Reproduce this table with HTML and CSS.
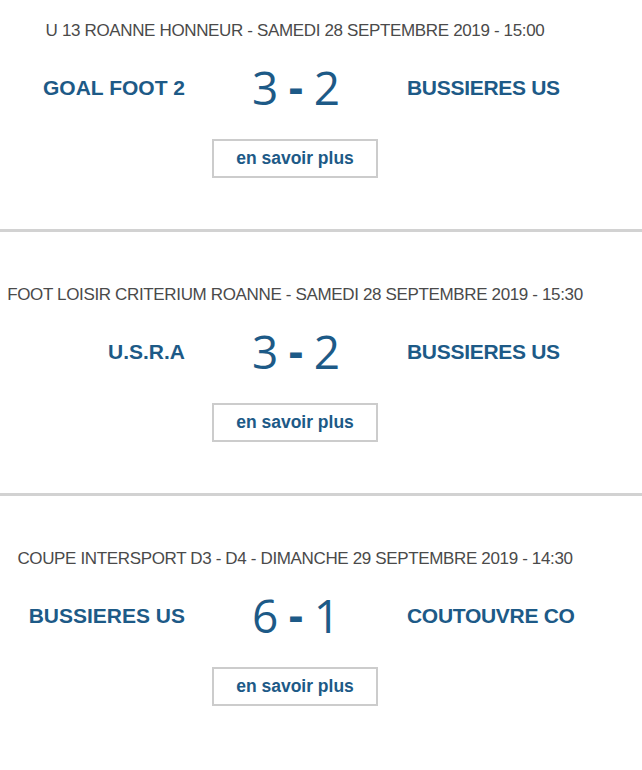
FILE: index.html
```html
<!DOCTYPE html>
<html lang="fr">
<head>
<meta charset="utf-8">
<title>Résultats</title>
<link rel="stylesheet" href="styles.css">
</head>
<body>
<div class="matches">
  <section class="match match--first">
    <div class="match__title">U 13 ROANNE HONNEUR - SAMEDI 28 SEPTEMBRE 2019 - 15:00</div>
    <div class="match__row">
      <div class="team team--home">GOAL FOOT 2</div>
      <div class="score"><span class="score__n">3</span><span class="score__sep">-</span><span class="score__n">2</span></div>
      <div class="team team--away">BUSSIERES US</div>
    </div>
    <div class="match__more"><a class="btn" href="#">en savoir plus</a></div>
  </section>
  <section class="match">
    <div class="match__title">FOOT LOISIR CRITERIUM ROANNE - SAMEDI 28 SEPTEMBRE 2019 - 15:30</div>
    <div class="match__row">
      <div class="team team--home">U.S.R.A</div>
      <div class="score"><span class="score__n">3</span><span class="score__sep">-</span><span class="score__n">2</span></div>
      <div class="team team--away">BUSSIERES US</div>
    </div>
    <div class="match__more"><a class="btn" href="#">en savoir plus</a></div>
  </section>
  <section class="match match--last">
    <div class="match__title">COUPE INTERSPORT D3 - D4 - DIMANCHE 29 SEPTEMBRE 2019 - 14:30</div>
    <div class="match__row">
      <div class="team team--home">BUSSIERES US</div>
      <div class="score"><span class="score__n">6</span><span class="score__sep">-</span><span class="score__n">1</span></div>
      <div class="team team--away">COUTOUVRE CO</div>
    </div>
    <div class="match__more"><a class="btn" href="#">en savoir plus</a></div>
  </section>
</div>
</body>
</html>
```
FILE: styles.css
```css
html, body {
  margin: 0;
  padding: 0;
  background: #ffffff;
}
body {
  font-family: "Liberation Sans Narrow", "Liberation Sans", Arial, sans-serif;
  color: #4a4a4a;
}
.matches {
  width: 642px;
}
.match {
  padding: 49px 0 51px;
  border-bottom: 3px solid #d2d2d2;
}
.match--first {
  padding-top: 17px;
}
.match--last {
  border-bottom: none;
}
.match__title {
  width: 590px;
  text-align: center;
  font-size: 17px;
  letter-spacing: -0.35px;
  line-height: 24px;
  padding-top: 2px;
  color: #4a4a4a;
  white-space: nowrap;
}
.match__row {
  width: 590px;
  display: grid;
  grid-template-columns: 185px 222px 183px;
  align-items: center;
  margin-top: 21px;
  height: 48px;
}
.team {
  font-weight: bold;
  font-size: 21px;
  color: #1d5a87;
  white-space: nowrap;
}
.team--home {
  text-align: right;
}
.team--away {
  text-align: left;
  letter-spacing: -0.3px;
}
.score {
  display: flex;
  justify-content: center;
  align-items: center;
  gap: 10px;
  color: #1d5a87;
  font-size: 46px;
  line-height: 48px;
  margin-top: -3px;
}
.score__n {
  font-family: "Open Sans", sans-serif;
  font-weight: 400;
}
.score__sep {
  font-weight: bold;
}
.match__more {
  width: 590px;
  display: flex;
  justify-content: center;
  margin-top: 27px;
}
.btn {
  display: block;
  box-sizing: border-box;
  width: 166px;
  height: 39px;
  border: 2px solid #cccccc;
  text-align: center;
  line-height: 35px;
  font-weight: bold;
  font-size: 17.5px;
  color: #1d5a87;
  text-decoration: none;
}
```
